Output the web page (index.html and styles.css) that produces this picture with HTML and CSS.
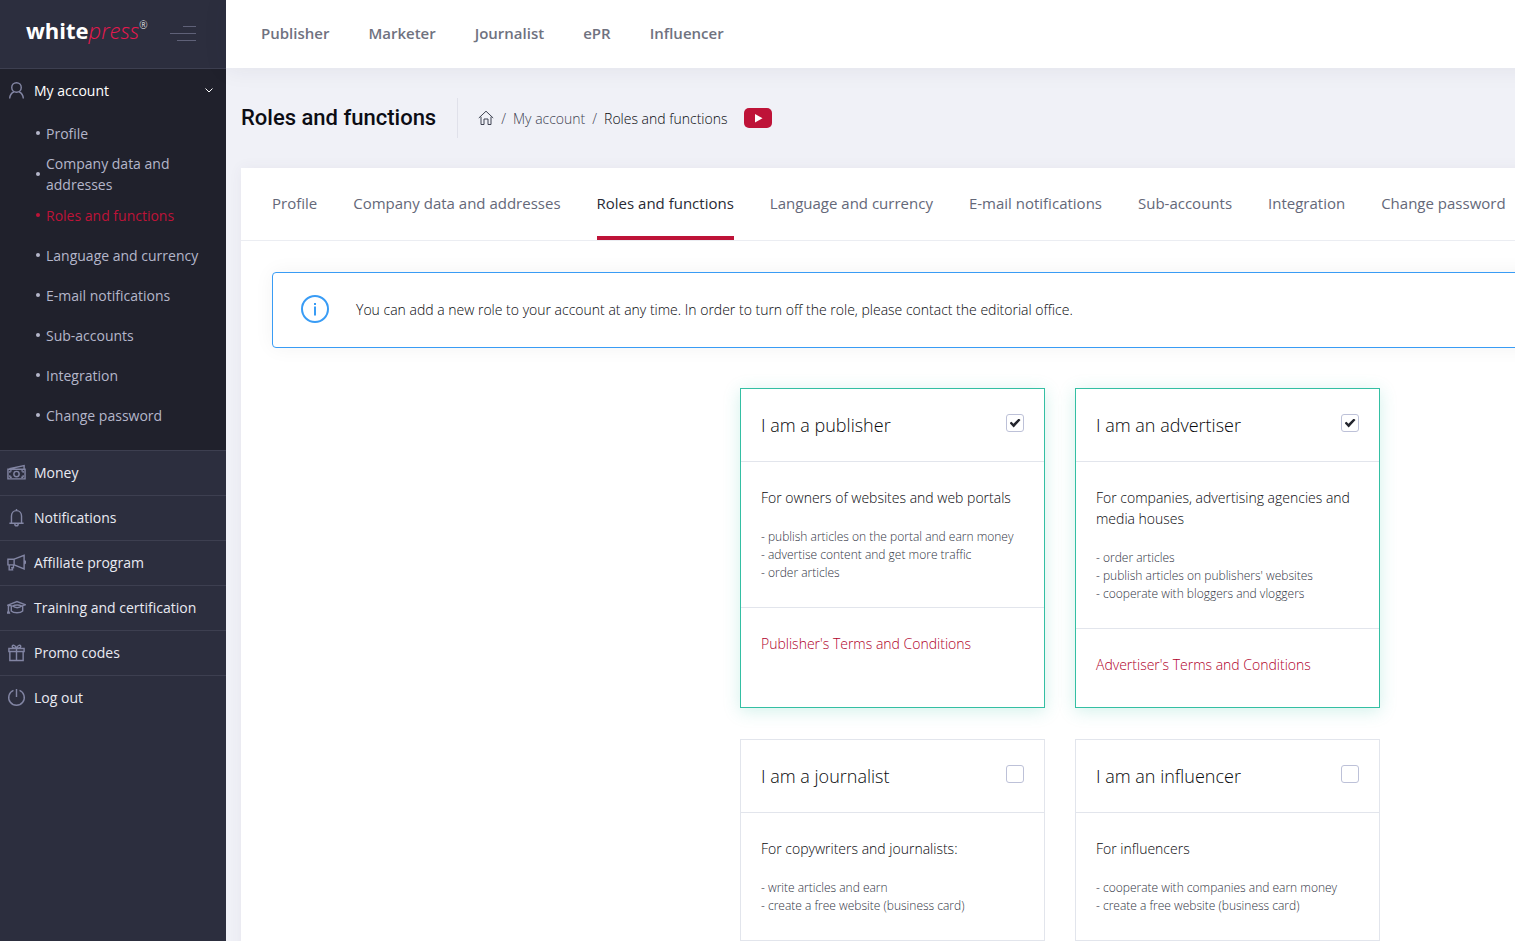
FILE: index.html
```html
<!DOCTYPE html>
<html lang="en">
<head>
    <meta charset="UTF-8">
    <meta name="viewport" content="width=device-width, initial-scale=1.0">
    <link rel="stylesheet" href="styles.css">
    <title>Roles and functions</title>
</head>
<body>
    <aside class="sidebar">
        <div class="brand">
            <a href="#" class="logo"><b>white</b><i>press</i><sup>®</sup></a>
            <button type="button" class="toggler" aria-label="Toggle menu">
                <svg width="26" height="16" viewBox="0 0 26 16"><path d="M13 .5h13M0 7.500h26M7 14.500h19"/></svg>
            </button>
        </div>

        <nav class="menu">
            <div class="menu-open">
                <a href="#" class="menu-link menu-link-active">
                    <svg class="icon" viewBox="0 0 20 20"><circle cx="10" cy="6.800" r="5"/><path d="M2.800 18.500c.2-4 2-6 4.500-7.200M17.200 18.500c-.2-4-2-6-4.500-7.200"/></svg>
                    My account
                    <svg class="arrow" width="8" height="5" viewBox="0 0 8 5"><path d="M.5.500L4 4 7.500.500"/></svg>
                </a>
                <ul class="submenu">
                    <li><a href="#">Profile</a></li>
                    <li><a href="#">Company data and addresses</a></li>
                    <li class="current"><a href="#">Roles and functions</a></li>
                    <li><a href="#">Language and currency</a></li>
                    <li><a href="#">E-mail notifications</a></li>
                    <li><a href="#">Sub-accounts</a></li>
                    <li><a href="#">Integration</a></li>
                    <li><a href="#">Change password</a></li>
                </ul>
            </div>
            <a href="#" class="menu-link">
                <svg class="icon" viewBox="0 0 20 20"><path d="M1 6.500h18v10.200H1zM2.500 6L18 2.700v3.500M3 8.300h2M3 8.300v2M17 8.300h-2M17 8.300v2M3 15h2M3 15v-2M17 15h-2M17 15v-2"/><circle cx="10" cy="11.600" r="2.800"/></svg>
                Money
            </a>
            <a href="#" class="menu-link">
                <svg class="icon" viewBox="0 0 20 20"><path d="M2.500 16h15M4.700 16V8.500c0-3.400 2.200-5.700 5.300-5.700s5.300 2.300 5.300 5.700V16M10 2.800V1M8.200 16.500c0 3 3.600 3 3.600 0"/></svg>
                Notifications
            </a>
            <a href="#" class="menu-link">
                <svg class="icon" viewBox="0 0 20 20"><path d="M1 6.500h6.500v6H1zM7.500 6.500L18 2.500v14.300l-10.500-4.300M18.300 8c1.500.3 1.500 3 0 3.300M2.300 12.500v5.300h3.500l-.6-2.300h1.600v-3"/></svg>
                Affiliate program
            </a>
            <a href="#" class="menu-link">
                <svg class="icon" viewBox="0 0 20 20"><path d="M1 7.500l9.500-3.700 9 3.300-4 1.400c-2.500-1.500-7-1.500-9.500 0zM4.500 8.700v5c2.500 2.400 9.500 2.400 12 0v-5M6 8.500c2.500 2.300 7 2.300 9.500 0M1.500 8v5.500M1.500 13.500l-1 2.300h2z"/></svg>
                Training and certification
            </a>
            <a href="#" class="menu-link">
                <svg class="icon" viewBox="0 0 20 20"><path d="M2 5.700h16V9H2zM3 9v9.500h14V9M10 5.700v12.800M10 5.500C9 2 5.500 1.500 5.500 3.500c0 1.200 2 2 4.500 2M10 5.500c1-3.500 4.500-4 4.500-2 0 1.200-2 2-4.500 2"/></svg>
                Promo codes
            </a>
            <a href="#" class="menu-link">
                <svg class="icon" viewBox="0 0 20 20"><path d="M6.800 2.500a8.200 8.200 0 1 0 6.400 0M10 1v8.500"/></svg>
                Log out
            </a>
        </nav>
    </aside>

    <div class="page">
        <header class="topbar">
            <a href="#">Publisher</a>
            <a href="#">Marketer</a>
            <a href="#">Journalist</a>
            <a href="#">ePR</a>
            <a href="#">Influencer</a>
        </header>

        <div class="subheader">
            <h1 class="title">Roles and functions</h1>
            <div class="breadcrumbs">
                <a href="#" aria-label="Home"><svg width="16" height="16" viewBox="0 0 16 16"><path d="M.8 8L8 1.200 15.200 8M3 6.800v7.700h3V9h4v5.500h3V6.800"/></svg></a>
                <span>/</span>
                <a href="#">My account</a>
                <span>/</span>
                <a href="#" class="here">Roles and functions</a>
            </div>
            <a href="#" class="video" aria-label="Video"><svg width="28" height="20" viewBox="0 0 28 20"><path d="M11 6l7.500 4.200L11 14.500z"/></svg></a>
        </div>

        <main class="panel">
            <nav class="tabs">
                <a href="#">Profile</a>
                <a href="#">Company data and addresses</a>
                <a href="#" class="tab-active">Roles and functions</a>
                <a href="#">Language and currency</a>
                <a href="#">E-mail notifications</a>
                <a href="#">Sub-accounts</a>
                <a href="#">Integration</a>
                <a href="#">Change password</a>
            </nav>

            <div class="panel-body">
                <div class="alert">
                    <svg width="28" height="28" viewBox="0 0 28 28"><circle cx="14" cy="14" r="13"/><path d="M14 11.500v9M14 8v2"/></svg>
                    You can add a new role to your account at any time. In order to turn off the role, please contact the editorial office.
                </div>

                <form class="roles">
                    <section class="role role-on">
                        <div class="role-head">
                            <label for="publisher">I am a publisher</label>
                            <input type="checkbox" id="publisher" checked>
                        </div>
                        <div class="role-body">
                            <p>For owners of websites and web portals</p>
                            <small>- publish articles on the portal and earn money<br>- advertise content and get more traffic<br>- order articles</small>
                        </div>
                        <div class="role-foot"><a href="#">Publisher's Terms and Conditions</a></div>
                    </section>

                    <section class="role role-on">
                        <div class="role-head">
                            <label for="advertiser">I am an advertiser</label>
                            <input type="checkbox" id="advertiser" checked>
                        </div>
                        <div class="role-body">
                            <p>For companies, advertising agencies and media houses</p>
                            <small>- order articles<br>- publish articles on publishers' websites<br>- cooperate with bloggers and vloggers</small>
                        </div>
                        <div class="role-foot"><a href="#">Advertiser's Terms and Conditions</a></div>
                    </section>

                    <section class="role">
                        <div class="role-head">
                            <label for="journalist">I am a journalist</label>
                            <input type="checkbox" id="journalist">
                        </div>
                        <div class="role-body">
                            <p>For copywriters and journalists:</p>
                            <small>- write articles and earn<br>- create a free website (business card)</small>
                        </div>
                    </section>

                    <section class="role">
                        <div class="role-head">
                            <label for="influencer">I am an influencer</label>
                            <input type="checkbox" id="influencer">
                        </div>
                        <div class="role-body">
                            <p>For influencers</p>
                            <small>- cooperate with companies and earn money<br>- create a free website (business card)</small>
                        </div>
                    </section>
                </form>
            </div>
        </main>
    </div>
</body>
</html>
```

FILE: styles.css
```css
*{
    box-sizing: border-box;
}

html, body{
    height: 100%;
}

body{
    margin: 0;
    display: flex;
    overflow: hidden;
    font-family: "Open Sans", sans-serif;
    font-size: 14px;
    font-weight: 300;
    line-height: 21px;
    color: #08090d;
    background-color: #f0f1f7;
}

a{
    color: inherit;
    text-decoration: none;
}

svg{
    display: block;
    flex: none;
    fill: none;
    stroke: currentColor;
}

/* sidebar */

.sidebar{
    flex: none;
    width: 226px;
    background-color: #2c2e3e;
    color: #fff;
}

.brand{
    display: flex;
    align-items: center;
    justify-content: space-between;
    height: 69px;
    padding: 0 30px 0 26px;
    border-bottom: 1px solid #3d3f50;
}

.logo{
    display: flex;
    font-size: 22px;
    line-height: 30px;
    padding-bottom: 8px;
}

.logo b{
    font-weight: 700;
}

.logo i{
    color: #e8184f;
}

.logo sup{
    font-size: 10px;
    line-height: 21px;
}

.toggler{
    padding: 0;
    border: none;
    background: none;
    color: #5f6178;
    cursor: pointer;
}

.menu-open{
    padding-bottom: 15px;
    background-color: #20212c;
}

.menu-link{
    display: flex;
    align-items: center;
    gap: 8px;
    height: 45px;
    padding: 0 13px 2px 7px;
    border-top: 1px solid #3d3f50;
    font-weight: 400;
    color: #e9eaf2;
}

.menu-link-active{
    height: 44px;
    border-top: none;
    color: #fff;
}

.icon{
    width: 19px;
    height: 19px;
    color: #8285a3;
    stroke-width: 1.5;
}

.arrow{
    margin-left: auto;
}

.submenu{
    margin: 0;
    padding: 0 20px 0 36px;
    list-style: none;
    font-weight: 400;
    color: #b4b6ca;
}

.submenu li{
    display: flex;
    align-items: center;
    gap: 6px;
    min-height: 40px;
}

.submenu li::before{
    content: "";
    flex: none;
    width: 4px;
    height: 4px;
    border-radius: 50%;
    background-color: currentColor;
}

.submenu .current{
    color: #be1338;
}

/* page */

.page{
    flex: 1;
    min-width: 1668px;
}

.topbar{
    display: flex;
    align-items: center;
    gap: 39px;
    height: 68px;
    padding: 0 35px 2px;
    background-color: #fff;
    box-shadow: 0 0 25px rgba(40, 42, 60, 0.08);
    font-size: 15px;
    font-weight: 600;
    color: #70727f;
}

.subheader{
    display: flex;
    align-items: center;
    height: 100px;
    padding: 0 15px;
}

.title{
    margin: 0;
    padding-right: 21px;
    border-right: 1px solid #e0e1ea;
    font-family: Roboto, sans-serif;
    font-size: 22px;
    font-weight: 500;
    line-height: 40px;
    color: #0c0d14;
}

.breadcrumbs{
    display: flex;
    align-items: center;
    gap: 7px;
    padding: 0 16px 0 20px;
    color: #3f4352;
}

.breadcrumbs .here{
    color: #08090d;
}

.video{
    border-radius: 5px;
    background-color: #be1338;
}

.video svg{
    fill: #fff;
    stroke: none;
}

.panel{
    margin: 0 15px;
    min-height: 773px;
    background-color: #fff;
    box-shadow: 0 0 13px rgba(82, 63, 105, 0.06);
}

.tabs{
    display: flex;
    gap: 36px;
    padding: 0 31px;
    border-bottom: 1px solid #ebedf2;
    font-size: 15px;
    font-weight: 400;
    color: #646879;
}

.tabs a{
    height: 72px;
    line-height: 70px;
}

.tabs .tab-active{
    border-bottom: 4px solid #be1338;
    color: #282a35;
}

.panel-body{
    padding: 31px;
}

.alert{
    display: flex;
    align-items: center;
    gap: 27px;
    height: 76px;
    padding: 0 28px 2px;
    border: 1px solid #399cf5;
    border-radius: 4px;
    box-shadow: 0 0 20px rgba(0, 0, 0, 0.05);
}

.alert svg{
    color: #399cf5;
    stroke-width: 2;
}

.roles{
    display: grid;
    grid-template-columns: 305px 305px;
    justify-content: center;
    gap: 31px 30px;
    padding-top: 40px;
}

.role{
    border: 1px solid #e2e5ec;
}

.role-on{
    border-color: #34bfa3;
    box-shadow: 0 3px 16px rgba(52, 191, 163, 0.22);
}

.role-head{
    display: flex;
    justify-content: space-between;
    height: 73px;
    padding: 25px 20px 0;
    border-bottom: 1px solid #e2e5ec;
    font-size: 18px;
    line-height: 22px;
}

.role-head input{
    appearance: none;
    display: grid;
    place-items: center;
    width: 18px;
    height: 18px;
    margin: 0;
    border: 1px solid #bdc1d8;
    border-radius: 3px;
    background-color: #fff;
}

.role-head input:checked::after{
    content: "";
    width: 11px;
    height: 9px;
    background-color: #24262e;
    clip-path: polygon(0 50%, 18% 36%, 36% 58%, 84% 0, 100% 16%, 38% 100%);
}

.role-body{
    padding: 25px 20px;
    border-bottom: 1px solid #e2e5ec;
}

.role-body p{
    margin: 0 0 20px;
}

.role-body small{
    display: block;
    font-size: 12px;
    line-height: 18px;
    color: #303342;
}

.role-foot{
    padding: 25px 20px 32px;
    color: #b0002a;
}
```
